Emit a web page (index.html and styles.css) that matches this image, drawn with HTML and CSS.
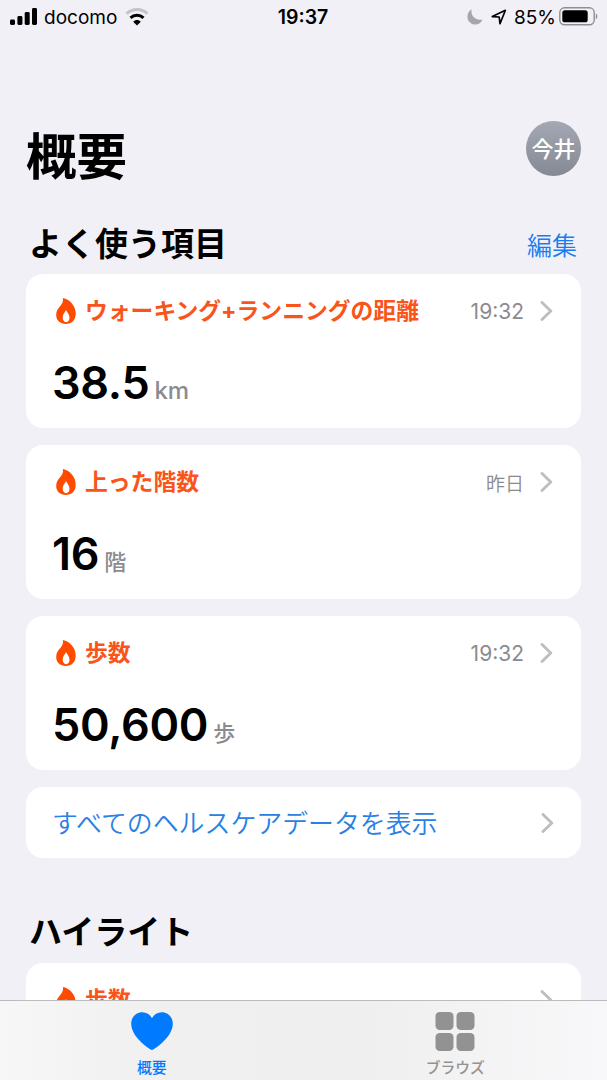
FILE: index.html
```html
<!DOCTYPE html>
<html lang="ja">
<head>
  <meta charset="UTF-8" />
  <title>ヘルスケア</title>
  <link rel="stylesheet" href="styles.css">
</head>
<body>
  <svg class="sprite" aria-hidden="true">
    <symbol id="flame" viewBox="0 0 20 26">
      <path fill-rule="evenodd" d="M6.800 0C13.500 1.200 19.700 7.500 19.700 15.500C19.700 22 15.600 26 9.900 26C4.200 26 .2 22.300 .2 17C.2 12.800 2.200 10.500 4.500 7.800C6.400 5.500 7.500 3 6.800 0ZM10 12C9.100 14.200 6.700 16.200 6.700 19.600C6.700 22.400 8.100 24.200 10.100 24.200C12.100 24.200 13.500 22.400 13.500 19.800C13.500 16.400 11 14.400 10 12Z"/>
    </symbol>
    <symbol id="chevron" viewBox="0 0 13 20">
      <path d="M2 1.500L10.800 10L2 18.500" fill="none" stroke="currentColor" stroke-width="2.900" stroke-linecap="round" stroke-linejoin="round"/>
    </symbol>
  </svg>

  <header class="status">
    <div class="status-left">
      <svg class="signal" width="27" height="18" viewBox="0 0 27 18">
        <rect x="0" y="11.500" width="5" height="5.500" rx="1.400"/>
        <rect x="7.400" y="8" width="5" height="9" rx="1.400"/>
        <rect x="14.700" y="4" width="5" height="13" rx="1.400"/>
        <rect x="22" y="0" width="5" height="17" rx="1.400"/>
      </svg>
      <span class="carrier">docomo</span>
      <svg class="wifi" width="24" height="18" viewBox="0 0 24 18">
        <path d="M1.600 5.800C7.300 .2 16.700 .2 22.400 5.800" stroke="#c3c3c7"/>
        <path d="M5.500 9.800C9.200 6.300 14.800 6.300 18.500 9.800" stroke="#000"/>
        <path d="M8.200 13.700C10.400 11.500 13.600 11.500 15.800 13.700L12 17.500Z" fill="#000"/>
      </svg>
    </div>
    <div class="clock">19:37</div>
    <div class="status-right">
      <svg class="moon" width="16" height="16" viewBox="0 0 16 16">
        <path d="M4.700 .3C3.300 6.800 8.300 12 15.600 10.400C14.200 13.800 11.600 15.600 8.300 15.600C4 15.600 .4 12.200 .4 7.800C.4 4.500 2 1.700 4.700 .3Z" fill="#a7a7ab"/>
      </svg>
      <svg class="location" width="16" height="16" viewBox="0 0 16 16">
        <path d="M1.300 7.600L14.400 1.300L9 14.700L8.200 8Z" fill="none" stroke="#000" stroke-width="1.700" stroke-linejoin="round"/>
      </svg>
      <span class="percent">85%</span>
      <svg class="battery" width="39" height="19" viewBox="0 0 39 19">
        <rect x=".8" y=".8" width="34.400" height="17" rx="4.800" fill="none" stroke="#8f8f93" stroke-width="1.400"/>
        <rect x="3.300" y="3.300" width="25.400" height="12" rx="2.600"/>
        <path d="M36.800 6.500C38.900 7.300 38.900 11.300 36.800 12.100Z" fill="#8f8f93"/>
      </svg>
    </div>
  </header>

  <main>
    <div class="title-row">
      <h1>概要</h1>
      <div class="avatar">今井</div>
    </div>

    <div class="section-row">
      <h2>よく使う項目</h2>
      <a class="edit">編集</a>
    </div>

    <section class="card">
      <div class="card-head">
        <svg class="flame"><use href="#flame"/></svg>
        <h3>ウォーキング+ランニングの距離</h3>
        <time>19:32</time>
        <svg class="chevron"><use href="#chevron"/></svg>
      </div>
      <div class="value">38.5<span class="unit latin">km</span></div>
    </section>

    <section class="card">
      <div class="card-head">
        <svg class="flame"><use href="#flame"/></svg>
        <h3>上った階数</h3>
        <time class="day">昨日</time>
        <svg class="chevron"><use href="#chevron"/></svg>
      </div>
      <div class="value">16<span class="unit">階</span></div>
    </section>

    <section class="card">
      <div class="card-head">
        <svg class="flame"><use href="#flame"/></svg>
        <h3>歩数</h3>
        <time>19:32</time>
        <svg class="chevron"><use href="#chevron"/></svg>
      </div>
      <div class="value">50,600<span class="unit">歩</span></div>
    </section>

    <a class="card show-all">
      <span>すべてのヘルスケアデータを表示</span>
      <svg class="chevron"><use href="#chevron"/></svg>
    </a>

    <h2 class="highlights">ハイライト</h2>

    <section class="card">
      <div class="card-head">
        <svg class="flame"><use href="#flame"/></svg>
        <h3>歩数</h3>
        <svg class="chevron"><use href="#chevron"/></svg>
      </div>
    </section>
  </main>

  <nav class="tabs">
    <a class="tab active">
      <svg width="42" height="38" viewBox="0 0 42 38">
        <path d="M21 38C19.500 38 .2 25.500 .2 11.800C.2 5 5 .2 11.200 .2C15.500 .2 19 2.400 21 6.200C23 2.400 26.500 .2 30.800 .2C37 .2 41.800 5 41.800 11.800C41.800 25.500 22.500 38 21 38Z" fill="currentColor"/>
      </svg>
      <span>概要</span>
    </a>
    <a class="tab">
      <svg width="40" height="40" viewBox="0 0 40 40" fill="currentColor">
        <rect x=".5" y="0" width="18" height="18" rx="4.200"/>
        <rect x="21.500" y="0" width="18" height="18" rx="4.200"/>
        <rect x=".5" y="21" width="18" height="18" rx="4.200"/>
        <rect x="21.500" y="21" width="18" height="18" rx="4.200"/>
      </svg>
      <span>ブラウズ</span>
    </a>
  </nav>
</body>
</html>
```

FILE: styles.css
```css
* {
  box-sizing: border-box;
}

body {
  margin: 0;
  height: 1080px;
  display: flex;
  flex-direction: column;
  overflow: hidden;
  background: #f1f0f6;
  color: #000;
  font-family: Inter, "Noto Sans CJK JP", sans-serif;
}

h1, h2, h3 {
  margin: 0;
  white-space: nowrap;
}

.sprite {
  display: none;
}

/* status bar */
.status {
  display: grid;
  grid-template-columns: 1fr auto 1fr;
  align-items: center;
  height: 33px;
  padding: 0 9px 0 10px;
  font-size: 19.5px;
  flex: none;
}

.status-left, .status-right {
  display: flex;
  align-items: center;
}

.status-right {
  justify-content: flex-end;
}

.carrier {
  margin: 0 8px 0 7px;
  padding-top: 1px;
  font-size: 19px;
}

.wifi {
  fill: none;
  stroke-width: 3;
}

.clock {
  padding-right: 2px;
  font-weight: 600;
}

.location {
  margin: 0 7px 0 8px;
}

.percent {
  margin-right: 3px;
  padding-top: 1px;
  font-size: 19px;
}

main {
  flex: 1;
  min-height: 0;
  overflow: hidden;
  padding: 88px 26px 0;
}

.title-row {
  display: flex;
  justify-content: space-between;
  align-items: flex-start;
  height: 96px;
}

h1 {
  font-size: 50.5px;
  line-height: 72px;
}

.avatar {
  width: 55px;
  height: 55px;
  border-radius: 50%;
  background: linear-gradient(#a4a8b4, #858993);
  color: #fff;
  font-size: 22px;
  font-weight: 500;
  line-height: 56px;
  text-align: center;
}

.section-row {
  display: flex;
  justify-content: space-between;
  align-items: center;
  height: 57.4px;
  padding: 0 4px 3px 3px;
}

h2 {
  font-size: 33px;
  font-weight: 700;
  line-height: 48px;
}

.edit {
  font-size: 25px;
  font-weight: 350;
  color: #1a7cf0;
}

/* cards */
.card {
  display: block;
  height: 154px;
  margin-bottom: 17px;
  padding: 21px 27px 0 26px;
  border-radius: 17px;
  background: #fff;
}

.card-head {
  display: flex;
  align-items: center;
  height: 32px;
}

.flame {
  width: 20px;
  height: 26px;
  margin: 0 9px 0 4px;
  fill: #ff4b00;
}

h3 {
  flex: 1;
  padding-bottom: 3px;
  font-size: 22.8px;
  font-weight: 700;
  color: #f9541a;
}

time {
  margin-right: 16px;
  font-size: 21px;
  color: #8b8b8f;
}

.day {
  font-size: 19px;
  font-weight: 350;
}

.chevron {
  width: 13px;
  height: 20px;
  margin-right: 1px;
  color: #bebec0;
}

.value {
  margin-top: 27px;
  font-size: 45px;
  font-weight: 600;
  line-height: 58px;
  letter-spacing: -.3px;
}

.unit {
  margin-left: 5px;
  font-size: 22px;
  font-weight: 500;
  color: #8b8b8f;
}

.unit.latin {
  font-size: 24px;
}

.show-all {
  display: flex;
  align-items: center;
  justify-content: space-between;
  height: 71px;
  padding: 0 26px;
  font-size: 25.9px;
  font-weight: 350;
  color: #2a80e4;
}

.show-all span {
  padding-bottom: 3px;
}

.highlights {
  margin: 50px 0 7px 3px;
}

/* tab bar */
.tabs {
  display: grid;
  grid-template-columns: 1fr 1fr;
  flex: none;
  height: 80px;
  border-top: 1px solid #bcbcbe;
  background: linear-gradient(to right, #f7f7f7, #f0f0f1 25%, #efefef 60%, #f8f8fa);
}

.tab {
  display: flex;
  flex-direction: column;
  align-items: center;
  padding-top: 11px;
  color: #929292;
  font-size: 14.8px;
  font-weight: 500;
  line-height: 22px;
}

.tab svg {
  flex: none;
}

.tab span {
  margin-top: auto;
  margin-bottom: 1px;
}

.active {
  color: #007aff;
}
```
